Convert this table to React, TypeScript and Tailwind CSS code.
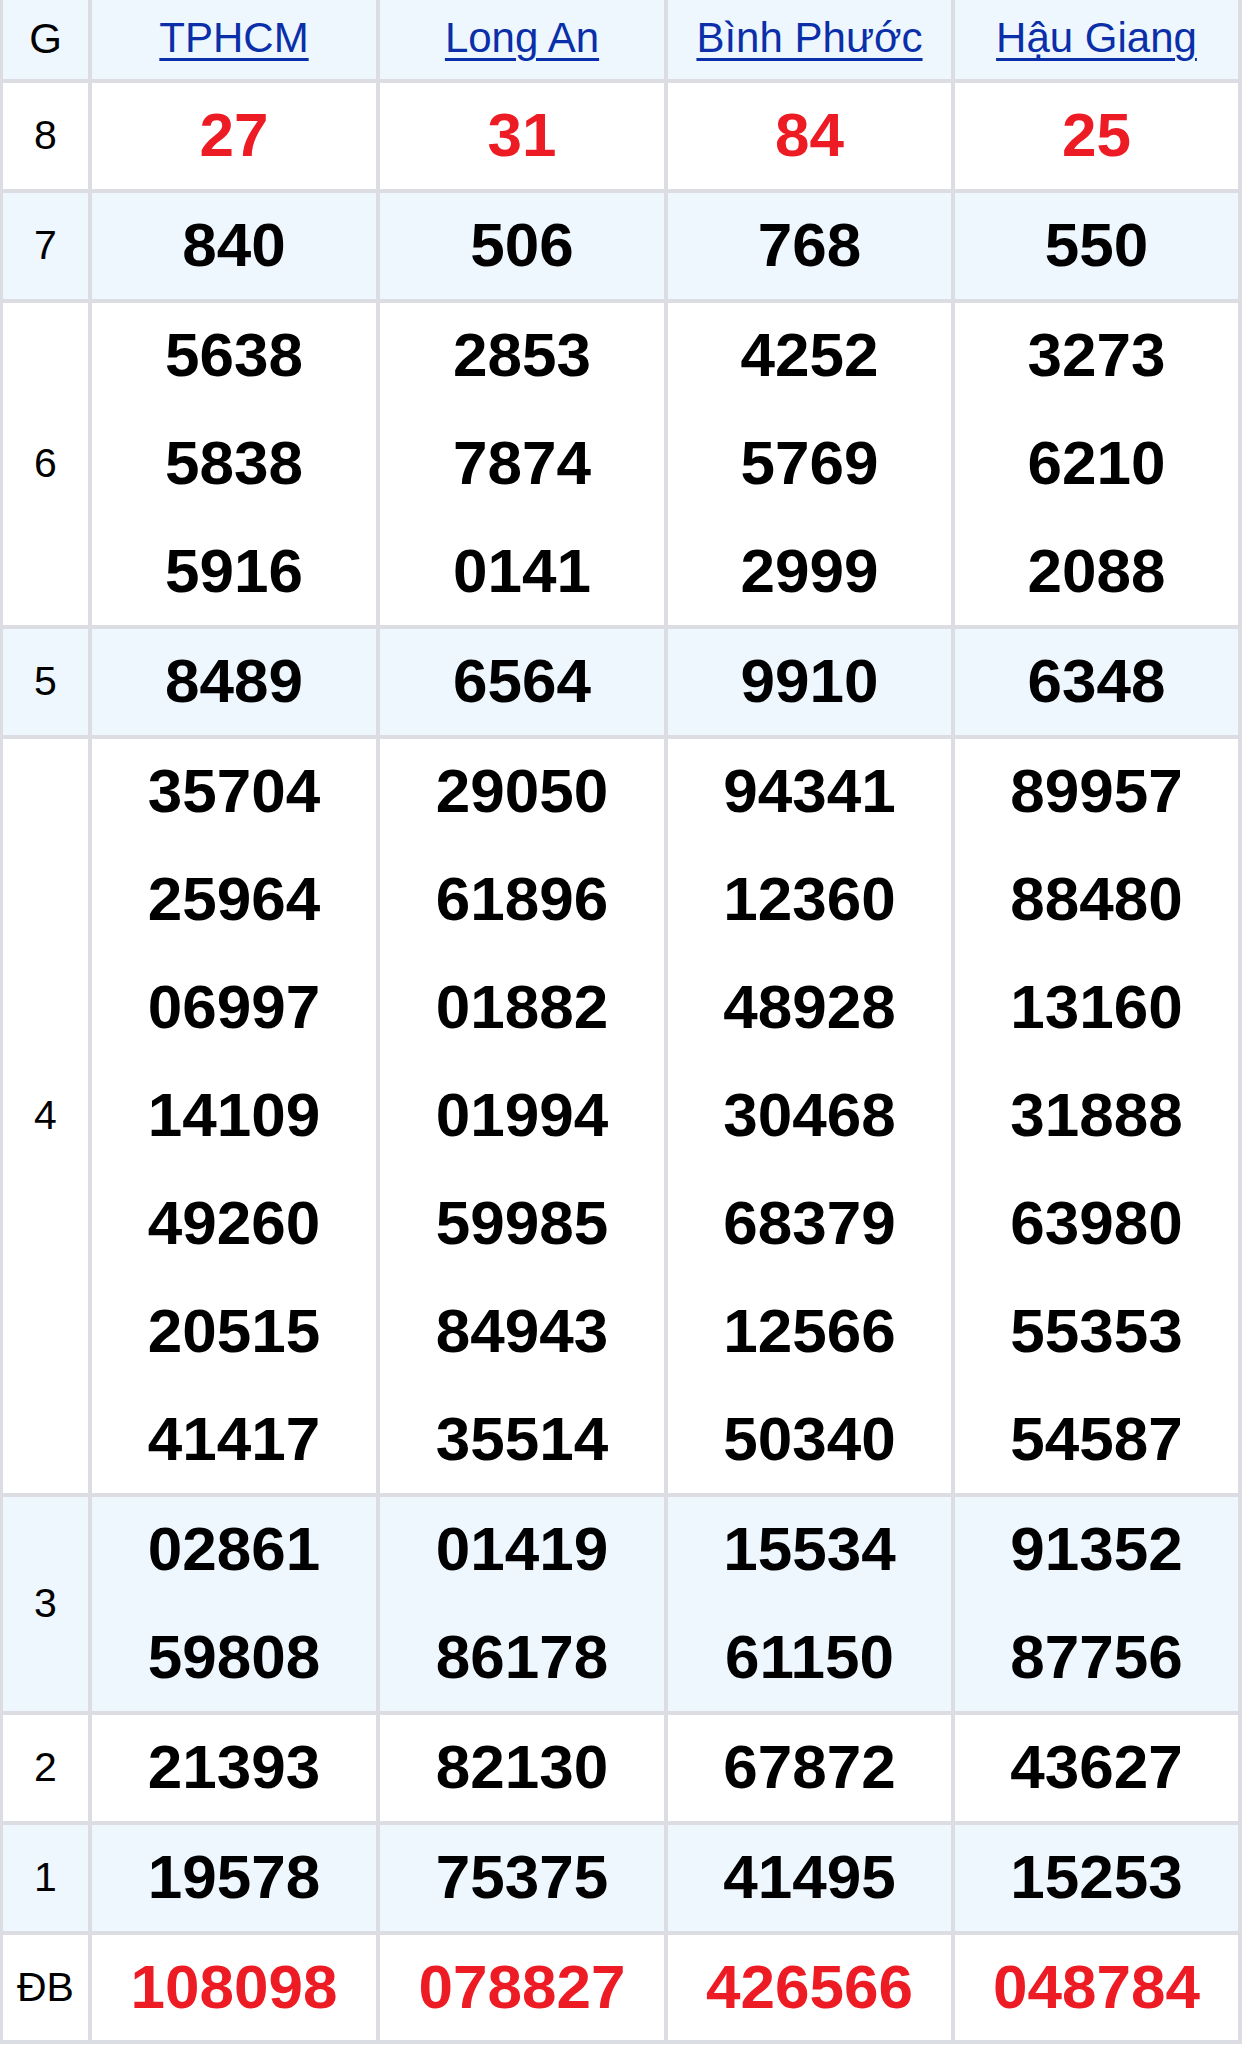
import { Fragment } from "react";

const provinces = ["TPHCM", "Long An", "Bình Phước", "Hậu Giang"];

type Row = {
  label: string;
  h: string;
  blue: boolean;
  red?: boolean;
  values: string[][];
};

const rows: Row[] = [
  { label: "8", h: "h-[106px]", blue: false, red: true, values: [["27"], ["31"], ["84"], ["25"]] },
  { label: "7", h: "h-[106px]", blue: true, values: [["840"], ["506"], ["768"], ["550"]] },
  {
    label: "6",
    h: "h-[322px]",
    blue: false,
    values: [
      ["5638", "5838", "5916"],
      ["2853", "7874", "0141"],
      ["4252", "5769", "2999"],
      ["3273", "6210", "2088"],
    ],
  },
  { label: "5", h: "h-[106px]", blue: true, values: [["8489"], ["6564"], ["9910"], ["6348"]] },
  {
    label: "4",
    h: "h-[754px]",
    blue: false,
    values: [
      ["35704", "25964", "06997", "14109", "49260", "20515", "41417"],
      ["29050", "61896", "01882", "01994", "59985", "84943", "35514"],
      ["94341", "12360", "48928", "30468", "68379", "12566", "50340"],
      ["89957", "88480", "13160", "31888", "63980", "55353", "54587"],
    ],
  },
  {
    label: "3",
    h: "h-[214px]",
    blue: true,
    values: [
      ["02861", "59808"],
      ["01419", "86178"],
      ["15534", "61150"],
      ["91352", "87756"],
    ],
  },
  { label: "2", h: "h-[106px]", blue: false, values: [["21393"], ["82130"], ["67872"], ["43627"]] },
  { label: "1", h: "h-[106px]", blue: true, values: [["19578"], ["75375"], ["41495"], ["15253"]] },
  { label: "ĐB", h: "h-[105px]", blue: false, red: true, values: [["108098"], ["078827"], ["426566"], ["048784"]] },
];

export default function App() {
  return (
    <div className="min-h-screen w-[1242px] bg-white font-['Liberation_Sans',Arial,sans-serif]">
      <div className="grid grid-cols-[85px_284px_284px_283px_283px] gap-[4px] bg-[#dcdde2] pl-[3px] pr-[4px] pb-[4px]">
        {/* Header */}
        <div className="flex h-[79px] items-center justify-center bg-[#eef6fe] pb-[2px] text-[42px] text-black">
          G
        </div>
        {provinces.map((p) => (
          <div
            key={p}
            className="flex h-[79px] items-center justify-center bg-[#eef6fe] pb-[3px]"
          >
            <a
              href="#"
              className="text-[42px] leading-none text-[#0a2fa8] underline decoration-[3px] underline-offset-[6px]"
            >
              {p}
            </a>
          </div>
        ))}

        {/* Prize rows */}
        {rows.map((row) => (
          <Fragment key={row.label}>
            <div
              className={`flex ${row.h} items-center justify-center text-[41px] text-black ${
                row.blue ? "bg-[#eef6fe]" : "bg-white"
              }`}
            >
              {row.label}
            </div>
            {row.values.map((col, ci) => (
              <div
                key={ci}
                className={`flex ${row.h} flex-col items-center justify-center ${
                  row.blue ? "bg-[#eef6fe]" : "bg-white"
                }`}
              >
                {col.map((v, vi) => (
                  <div
                    key={vi}
                    className={`h-[108px] shrink-0 text-[62px] font-bold leading-[106px] ${
                      row.red ? "text-[#ed1c24]" : "text-black"
                    }`}
                  >
                    {v}
                  </div>
                ))}
              </div>
            ))}
          </Fragment>
        ))}
      </div>
    </div>
  );
}
